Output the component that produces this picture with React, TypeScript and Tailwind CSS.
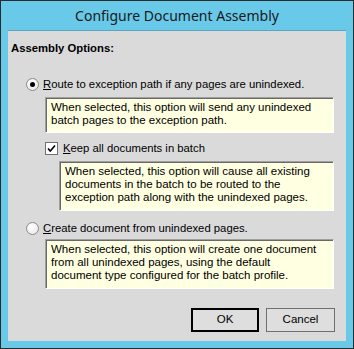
const font = { fontFamily: '"Liberation Sans", Arial, sans-serif' };

function Radio({ checked }: { checked: boolean }) {
  return (
    <span className="relative inline-flex h-[13px] w-[13px] shrink-0 items-center justify-center rounded-full border border-[#8a8a8a] bg-[radial-gradient(circle_at_40%_35%,#ffffff,#e6e6e6)]">
      {checked && <span className="h-[5px] w-[5px] rounded-full bg-black" />}
    </span>
  );
}

function Checkbox() {
  return (
    <span className="inline-flex h-[13px] w-[13px] shrink-0 items-center justify-center border border-[#707070] bg-white">
      <svg width="9" height="9" viewBox="0 0 9 9">
        <path d="M1 4.5 L3.3 7 L8 1.5" fill="none" stroke="#000" strokeWidth="1.6" />
      </svg>
    </span>
  );
}

function Note({ lines, className }: { lines: string[]; className: string }) {
  return (
    <div
      className={`border border-t-[#a0a0a0] border-l-[#a0a0a0] border-r-white border-b-white bg-[#ffffe1] pl-[5px] pt-[3px] text-[11.5px] leading-[13px] text-black shadow-[inset_1px_1px_0_#696969] ${className}`}
    >
      {lines.map((l, i) => (
        <div key={i} className="whitespace-nowrap">{l}</div>
      ))}
    </div>
  );
}

export default function App() {
  return (
    <div className="flex h-[349px] w-[354px] flex-col border border-[#2b2b2b] bg-[#68c9e9]" style={font}>
      {/* Title bar */}
      <div className="flex h-[29px] shrink-0 items-center justify-center">
        <span className="text-[14px] text-[#1a1a1a]" style={{ fontFamily: '"Noto Sans", "Open Sans", sans-serif' }}>
          Configure Document Assembly
        </span>
      </div>

      {/* Client area */}
      <div className="mx-[7px] flex h-[311px] flex-col border-t border-[#5aa5c0] bg-[#dadada] text-[11.3px] text-black">
        <div className="ml-[3px] mt-[10px] h-[14px] leading-[14px] font-bold">Assembly Options:</div>

        <div className="ml-[18px] mt-[21px] flex h-[16px] items-center gap-[4px]">
          <Radio checked />
          <span className="leading-[16px]">
            <span className="underline">R</span>oute to exception path if any pages are unindexed.
          </span>
        </div>

        <Note
          className="ml-[37px] mt-[5px] h-[36px] w-[289px]"
          lines={['When selected, this option will send any unindexed', 'batch pages to the exception path.']}
        />

        <div className="ml-[37px] mt-[7px] flex h-[16px] items-center gap-[5px]">
          <Checkbox />
          <span className="leading-[16px]">
            <span className="underline">K</span>eep all documents in batch
          </span>
        </div>

        <Note
          className="ml-[51px] mt-[5px] h-[50px] w-[275px]"
          lines={[
            'When selected, this option will cause all existing',
            'documents in the batch to be routed to the',
            'exception path along with the unindexed pages.',
          ]}
        />

        <div className="ml-[18px] mt-[9px] flex h-[16px] items-center gap-[4px]">
          <Radio checked={false} />
          <span className="leading-[16px]">
            <span className="underline">C</span>reate document from unindexed pages.
          </span>
        </div>

        <Note
          className="ml-[37px] mt-[3px] h-[50px] w-[289px]"
          lines={[
            'When selected, this option will create one document',
            'from all unindexed pages, using the default',
            'document type configured for the batch profile.',
          ]}
        />

        <div className="mr-[11px] mt-[19px] flex h-[24px] justify-end gap-[7px]">
          <button className="flex h-[24px] w-[68px] items-center justify-center border-2 border-black bg-[#dedede] text-[11.5px]">
            OK
          </button>
          <button className="flex h-[24px] w-[69px] items-center justify-center border border-[#707070] bg-[#dedede] text-[11.5px]">
            Cancel
          </button>
        </div>
      </div>
    </div>
  );
}
